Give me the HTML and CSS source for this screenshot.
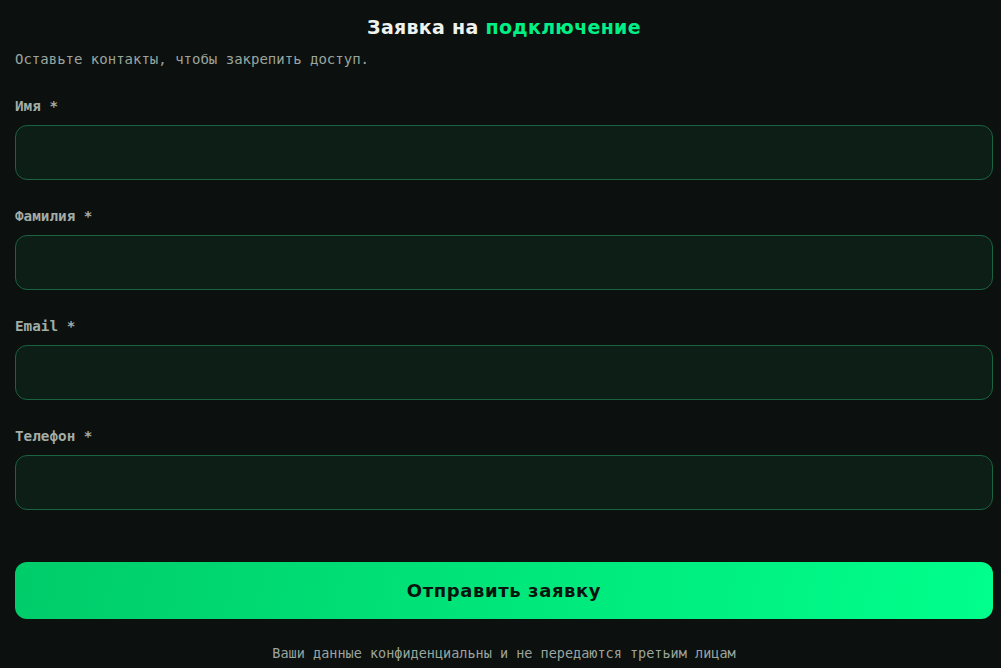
FILE: index.html
```html
<!DOCTYPE html>
<html lang="ru">
<head>
    <meta charset="UTF-8">
    <title>Заявка на подключение</title>
    <link rel="stylesheet" href="styles.css">
</head>
<body>
    <div class="container">
        <h1>Заявка на <span class="accent">подключение</span></h1>
        <p class="lead">Оставьте контакты, чтобы закрепить доступ.</p>

        <form class="form">
            <label class="field">
                <span class="label">Имя *</span>
                <input type="text" name="name">
            </label>
            <label class="field">
                <span class="label">Фамилия *</span>
                <input type="text" name="surname">
            </label>
            <label class="field">
                <span class="label">Email *</span>
                <input type="email" name="email">
            </label>
            <label class="field">
                <span class="label">Телефон *</span>
                <input type="tel" name="phone">
            </label>

            <button type="button" class="submit">Отправить заявку</button>
        </form>

        <p class="note">Ваши данные конфиденциальны и не передаются третьим лицам</p>
    </div>
</body>
</html>
```

FILE: styles.css
```css
body {
    margin: 0;
    background: #0c100e;
    color: #9aa59f;
    font-family: 'DejaVu Sans Mono', monospace;
}

.container {
    padding: 0 8px 0 15px;
}

h1 {
    margin: 0;
    padding-top: 14px;
    text-align: center;
    font-family: 'DejaVu Sans', sans-serif;
    font-weight: bold;
    font-size: 19px;
    line-height: 26px;
    letter-spacing: 0.3px;
    color: #eef2ef;
}

.accent {
    color: #00f088;
}

.lead {
    margin: 10px 0 0;
    font-size: 14px;
    line-height: 18px;
    color: #9aa59f;
}

.form {
    display: flex;
    flex-direction: column;
    margin-top: 29px;
}

.field {
    display: flex;
    flex-direction: column;
    gap: 10px;
    margin-bottom: 27px;
}

.label {
    font-size: 14.3px;
    line-height: 18px;
    font-weight: bold;
    color: #a3ada7;
}

.field input {
    height: 55px;
    box-sizing: border-box;
    background: #0c1e16;
    border: 1px solid #1a6341;
    border-radius: 12px;
    color: #eef2ef;
    font: inherit;
    padding: 0 16px;
    outline: none;
}

.submit {
    margin-top: 25px;
    height: 57px;
    border: none;
    border-radius: 12px;
    background: linear-gradient(100deg, #00cc6a 0%, #00e67a 50%, #00ff8c 100%);
    color: #08140e;
    font-family: 'DejaVu Sans', sans-serif;
    font-weight: bold;
    font-size: 18px;
    letter-spacing: 0.6px;
    cursor: pointer;
}

.note {
    margin: 25px 0 0;
    text-align: center;
    font-size: 13.5px;
    line-height: 18px;
    color: #9aa59f;
}
```
